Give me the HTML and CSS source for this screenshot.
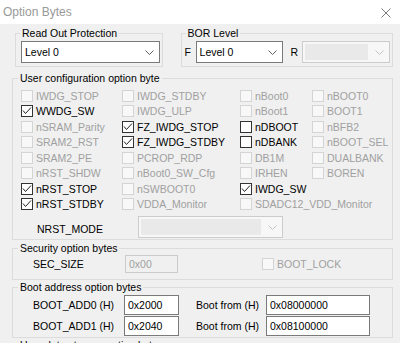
FILE: index.html
```html
<!DOCTYPE html>
<html lang="en">
<head>
    <meta charset="UTF-8">
    <meta name="viewport" content="width=device-width, initial-scale=1.0">
    <title>Option Bytes</title>
    <link rel="stylesheet" href="styles.css">
</head>
<body>

    <!-- Title Bar -->
    <div class="titlebar">
        <span class="title">Option Bytes</span>
        <svg class="close" width="10" height="10" viewBox="0 0 10 10"><path d="M0.5 0.5L9.5 9.5M9.5 0.5L0.5 9.5" stroke="#7a7a7a" stroke-width="1"/></svg>
    </div>

    <div class="dialog">

        <!-- Read protection / BOR -->
        <div class="top-row">
            <fieldset class="group rop">
                <legend>Read Out Protection</legend>
                <div class="combo"><span class="value">Level 0</span><svg class="chev" width="9" height="5" viewBox="0 0 9 5"><polyline points="0.5,0.5 4.5,4.5 8.5,0.5" fill="none" stroke="#606060"/></svg></div>
            </fieldset>
            <fieldset class="group bor">
                <legend>BOR Level</legend>
                <div class="bor-row">
                    <span class="letter">F</span>
                    <div class="combo bor-combo"><span class="value">Level 0</span><svg class="chev" width="9" height="5" viewBox="0 0 9 5"><polyline points="0.5,0.5 4.5,4.5 8.5,0.5" fill="none" stroke="#606060"/></svg></div>
                    <span class="letter">R</span>
                    <div class="combo bor-combo disabled"><span class="value"></span><svg class="chev" width="9" height="5" viewBox="0 0 9 5"><polyline points="0.5,0.5 4.5,4.5 8.5,0.5" fill="none" stroke="#c4c4c4"/></svg></div>
                </div>
            </fieldset>
        </div>

        <!-- User configuration -->
        <fieldset class="group user">
            <legend>User configuration option byte</legend>
            <div class="options">
                <label class="check disabled"><span class="box"></span>IWDG_STOP</label>
                <label class="check disabled"><span class="box"></span>IWDG_STDBY</label>
                <label class="check disabled"><span class="box"></span>nBoot0</label>
                <label class="check disabled"><span class="box"></span>nBOOT0</label>

                <label class="check"><span class="box"><svg width="10" height="10" viewBox="0 0 10 10"><polyline points="1,4.5 3.5,7.5 9,1.5" fill="none" stroke="#222"/></svg></span>WWDG_SW</label>
                <label class="check disabled"><span class="box"></span>IWDG_ULP</label>
                <label class="check disabled"><span class="box"></span>nBoot1</label>
                <label class="check disabled"><span class="box"></span>BOOT1</label>

                <label class="check disabled"><span class="box"></span>nSRAM_Parity</label>
                <label class="check"><span class="box"><svg width="10" height="10" viewBox="0 0 10 10"><polyline points="1,4.5 3.5,7.5 9,1.5" fill="none" stroke="#222"/></svg></span>FZ_IWDG_STOP</label>
                <label class="check"><span class="box"></span>nDBOOT</label>
                <label class="check disabled"><span class="box"></span>nBFB2</label>

                <label class="check disabled"><span class="box"></span>SRAM2_RST</label>
                <label class="check"><span class="box"><svg width="10" height="10" viewBox="0 0 10 10"><polyline points="1,4.5 3.5,7.5 9,1.5" fill="none" stroke="#222"/></svg></span>FZ_IWDG_STDBY</label>
                <label class="check"><span class="box"></span>nDBANK</label>
                <label class="check disabled"><span class="box"></span>nBOOT_SEL</label>

                <label class="check disabled"><span class="box"></span>SRAM2_PE</label>
                <label class="check disabled"><span class="box"></span>PCROP_RDP</label>
                <label class="check disabled"><span class="box"></span>DB1M</label>
                <label class="check disabled"><span class="box"></span>DUALBANK</label>

                <label class="check disabled"><span class="box"></span>nRST_SHDW</label>
                <label class="check disabled"><span class="box"></span>nBoot0_SW_Cfg</label>
                <label class="check disabled"><span class="box"></span>IRHEN</label>
                <label class="check disabled"><span class="box"></span>BOREN</label>

                <label class="check"><span class="box"><svg width="10" height="10" viewBox="0 0 10 10"><polyline points="1,4.5 3.5,7.5 9,1.5" fill="none" stroke="#222"/></svg></span>nRST_STOP</label>
                <label class="check disabled"><span class="box"></span>nSWBOOT0</label>
                <label class="check"><span class="box"><svg width="10" height="10" viewBox="0 0 10 10"><polyline points="1,4.5 3.5,7.5 9,1.5" fill="none" stroke="#222"/></svg></span>IWDG_SW</label>
                <span></span>

                <label class="check"><span class="box"><svg width="10" height="10" viewBox="0 0 10 10"><polyline points="1,4.5 3.5,7.5 9,1.5" fill="none" stroke="#222"/></svg></span>nRST_STDBY</label>
                <label class="check disabled"><span class="box"></span>VDDA_Monitor</label>
                <label class="check disabled wide"><span class="box"></span>SDADC12_VDD_Monitor</label>
            </div>
            <div class="nrst-row">
                <span class="nrst-label">NRST_MODE</span>
                <div class="combo nrst-combo disabled"><span class="value"></span><svg class="chev" width="9" height="5" viewBox="0 0 9 5"><polyline points="0.5,0.5 4.5,4.5 8.5,0.5" fill="none" stroke="#c4c4c4"/></svg></div>
            </div>
        </fieldset>

        <!-- Security -->
        <fieldset class="group sec">
            <legend>Security option bytes</legend>
            <div class="sec-row">
                <span class="field-label sec-label">SEC_SIZE</span>
                <span class="textbox sec-box disabled">0x00</span>
                <label class="check disabled lock"><span class="box"></span>BOOT_LOCK</label>
            </div>
        </fieldset>

        <!-- Boot address -->
        <fieldset class="group boot">
            <legend>Boot address option bytes</legend>
            <div class="boot-row">
                <span class="field-label">BOOT_ADD0 (H)</span>
                <span class="textbox addr">0x2000</span>
                <span class="from-label">Boot from (H)</span>
                <span class="textbox from">0x08000000</span>
            </div>
            <div class="boot-row">
                <span class="field-label">BOOT_ADD1 (H)</span>
                <span class="textbox addr">0x2040</span>
                <span class="from-label">Boot from (H)</span>
                <span class="textbox from">0x08100000</span>
            </div>
        </fieldset>

        <fieldset class="group data">
            <legend>User data storage option bytes</legend>
        </fieldset>

    </div>

</body>
</html>
```

FILE: styles.css
```css
body {
    margin: 0;
    width: 400px;
    height: 343px;
    overflow: hidden;
    background: #f0f0f0;
    color: #000;
    font-family: 'Liberation Sans', Arial, sans-serif;
    font-size: 10.5px;
}
.titlebar {
    height: 24px;
    background: #fff;
    display: flex;
    align-items: center;
    justify-content: space-between;
    padding: 0 9px 0 3px;
}
.title {
    font-size: 12px;
    color: #999;
}
.close {
    margin-top: 2px;
}
.dialog {
    padding: 0 7px 0 12px;
}
.top-row {
    display: flex;
    gap: 18px;
    padding-left: 3px;
    margin-top: 3px;
}
.group {
    box-sizing: border-box;
    margin: 0;
    min-width: 0;
    border: 1px solid #dcdcdc;
    padding: 0 8px;
}
.group legend {
    padding: 0 2px;
    line-height: 13px;
    margin-left: -3px;
}
.rop {
    width: 148px;
    padding: 1px 2px 3px 5px;
}
.rop legend {
    margin-left: -1px;
}
.bor {
    width: 213px;
    padding: 1px 2px 3px 2px;
}
.bor legend {
    margin-left: 2px;
}
.bor-row {
    display: flex;
    align-items: center;
}
.letter {
    width: 12px;
    padding-left: 1px;
    box-sizing: border-box;
}
.combo {
    box-sizing: border-box;
    height: 22px;
    border: 1px solid #7a7a7a;
    background: #fff;
    display: flex;
    align-items: center;
    padding: 0 5px 0 3px;
}
.combo .value {
    flex: 1;
}
.combo.disabled {
    border-color: #cccccc;
    background: #f7f7f7;
    padding: 2px 5px 2px 2px;
}
.combo.disabled .value {
    align-self: stretch;
    background: #e9e9e9;
    margin-right: 7px;
}
.bor-combo {
    width: 87px;
}
.bor-combo.disabled {
    width: 88px;
}
.bor-combo + .letter {
    margin-left: 7px;
}
.user {
    margin-top: 5px;
    padding: 3px 8px 1px;
}
.options {
    display: grid;
    grid-template-columns: 101px 118px 72px auto;
    grid-auto-rows: 15.5px;
}
.check {
    display: flex;
    align-items: center;
    gap: 3px;
    white-space: nowrap;
}
.box {
    box-sizing: border-box;
    width: 12px;
    height: 12px;
    flex: none;
    border: 1px solid #333;
    background: #fff;
    display: flex;
    align-items: center;
    justify-content: center;
}
.check.disabled {
    color: #a0a0a0;
}
.check.disabled .box {
    border-color: #d4d4d4;
    background: #f8f8f8;
}
.wide {
    grid-column: span 2;
}
.nrst-row {
    display: flex;
    align-items: center;
    height: 22px;
    margin-top: 4px;
}
.nrst-label {
    width: 117px;
    padding-left: 16px;
    box-sizing: border-box;
    padding-top: 3px;
}
.nrst-combo {
    width: 145px;
}
.sec {
    margin-top: 2px;
    padding: 0 8px 6px;
}
.sec-row,
.boot-row {
    display: flex;
    align-items: center;
}
.sec-row {
    height: 18px;
}
.field-label {
    width: 103px;
    padding-left: 12px;
    box-sizing: border-box;
}
.sec-label {
    width: 104px;
}
.textbox {
    box-sizing: border-box;
    height: 20px;
    line-height: 18px;
    border: 1px solid #7a7a7a;
    background: #fff;
    padding-left: 3px;
}
.textbox.disabled {
    height: 18px;
    line-height: 16px;
    border-color: #cccccc;
    background: #f0f0f0;
    color: #a0a0a0;
}
.sec-box {
    width: 53px;
}
.lock {
    margin-left: 84px;
}
.boot {
    margin-top: 1px;
    padding: 1px 8px 1px;
}
.boot-row + .boot-row {
    margin-top: 1px;
}
.addr {
    width: 55px;
}
.from-label {
    width: 70px;
    margin-left: 17px;
}
.from {
    width: 104px;
}
.data {
    margin-top: 1px;
    height: 20px;
}
```
